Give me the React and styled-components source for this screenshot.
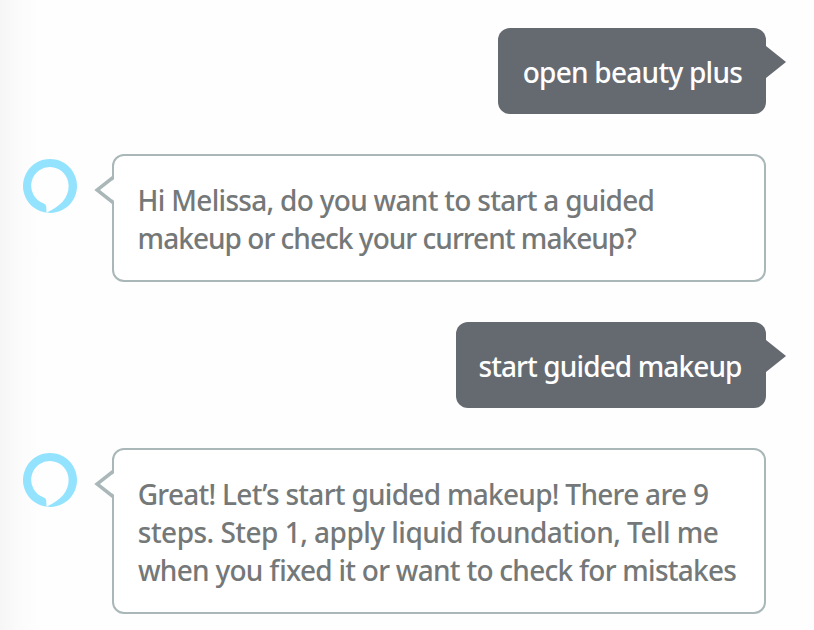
import React from "react";
import styled, { createGlobalStyle } from "styled-components";

const GlobalStyle = createGlobalStyle`
  * { box-sizing: border-box; }
  body {
    margin: 0;
    background: #fefefe;
    font-family: "Amazon Ember", "Noto Sans", "Open Sans", sans-serif;
  }
`;

const Chat = styled.main`
  display: flex;
  flex-direction: column;
  gap: 40px;
  width: 814px;
  height: 630px;
  padding: 28px 48px 0 23px;
  overflow: hidden;
  background: linear-gradient(to right, #f6f6f6 0, #fbfbfb 20px, #fefefe 40px);
`;

const UserRow = styled.div`
  display: flex;
  justify-content: flex-end;
`;

const AgentRow = styled.div`
  display: flex;
  align-items: flex-start;
`;

const Bubble = styled.div`
  position: relative;
  border-radius: 12px;
  font-size: 28px;
  font-weight: 500;
  line-height: 38px;
  white-space: nowrap;
  font-feature-settings: "liga" 1;
`;

const UserBubble = styled(Bubble)`
  width: ${(p) => p.$width}px;
  padding: 25px 24px 23px;
  background: #656a71;
  color: #fff;
`;

const AgentBubble = styled(Bubble)`
  flex: 1;
  margin-left: 35px;
  padding: 25px 0 23px 24px;
  border: 2px solid #aab7b8;
  background: #fff;
  color: #747878;
`;

const Line = styled.div`
  margin-left: ${(p) => p.$indent}px;
  letter-spacing: ${(p) => p.$tracking}px;
`;

const UserPointer = styled.svg`
  position: absolute;
  top: 18px;
  left: 100%;
  display: block;
`;

const AgentPointer = styled.svg`
  position: absolute;
  top: 18px;
  left: -20px;
  display: block;
`;

const Avatar = styled.svg`
  display: block;
  flex: none;
  margin-top: 5px;
`;

function UserMessage({ width, line }) {
  return (
    <UserRow>
      <UserBubble $width={width}>
        <Line $indent={line.indent} $tracking={line.tracking}>{line.text}</Line>
        <UserPointer width="20" height="32" viewBox="0 0 20 32">
          <path d="M0 0L20 16L0 32Z" fill="#656a71" />
        </UserPointer>
      </UserBubble>
    </UserRow>
  );
}

function AgentMessage({ lines }) {
  return (
    <AgentRow>
      <Avatar width="54" height="54" viewBox="0 0 54 54" aria-label="Alexa">
        <path
          fillRule="evenodd"
          fill="#94e3fe"
          d="M23.5 53.8A27 27 0 1 1 30.5 53.8Q27 54.2 23.7 53.5C38 47 45.6 38.5 45.6 27A18.7 18.7 0 1 0 20.3 44.3C22.5 45.1 23.3 46.2 23.3 48.5Z"
        />
      </Avatar>
      <AgentBubble>
        {lines.map((line) => (
          <Line key={line.text} $indent={line.indent} $tracking={line.tracking}>{line.text}</Line>
        ))}
        <AgentPointer width="20" height="34" viewBox="0 0 20 34">
          <path d="M20 5L6 16L20 27Z" fill="#fff" />
          <path d="M18 2L0.3 16L18 30H20V27L6 16L20 5V2Z" fill="#aab7b8" />
        </AgentPointer>
      </AgentBubble>
    </AgentRow>
  );
}

export default function App() {
  return (
    <>
      <GlobalStyle />
      <Chat>
        <UserMessage width={268} line={{ text: "open beauty plus", indent: 0.7, tracking: -0.74 }} />
        <AgentMessage
          lines={[
            { text: "Hi Melissa, do you want to start a guided", indent: -0.4, tracking: -0.7 },
            { text: "makeup or check your current makeup?", indent: -0.4, tracking: -0.97 },
          ]}
        />
        <UserMessage width={310} line={{ text: "start guided makeup", indent: -1.6, tracking: -0.88 }} />
        <AgentMessage
          lines={[
            { text: "Great! Let’s start guided makeup! There are 9", indent: -0.3, tracking: -0.71 },
            { text: "steps. Step 1, apply liquid foundation, Tell me", indent: -0.2, tracking: -0.52 },
            { text: "when you fixed it or want to check for mistakes", indent: 0, tracking: -0.73 },
          ]}
        />
      </Chat>
    </>
  );
}
